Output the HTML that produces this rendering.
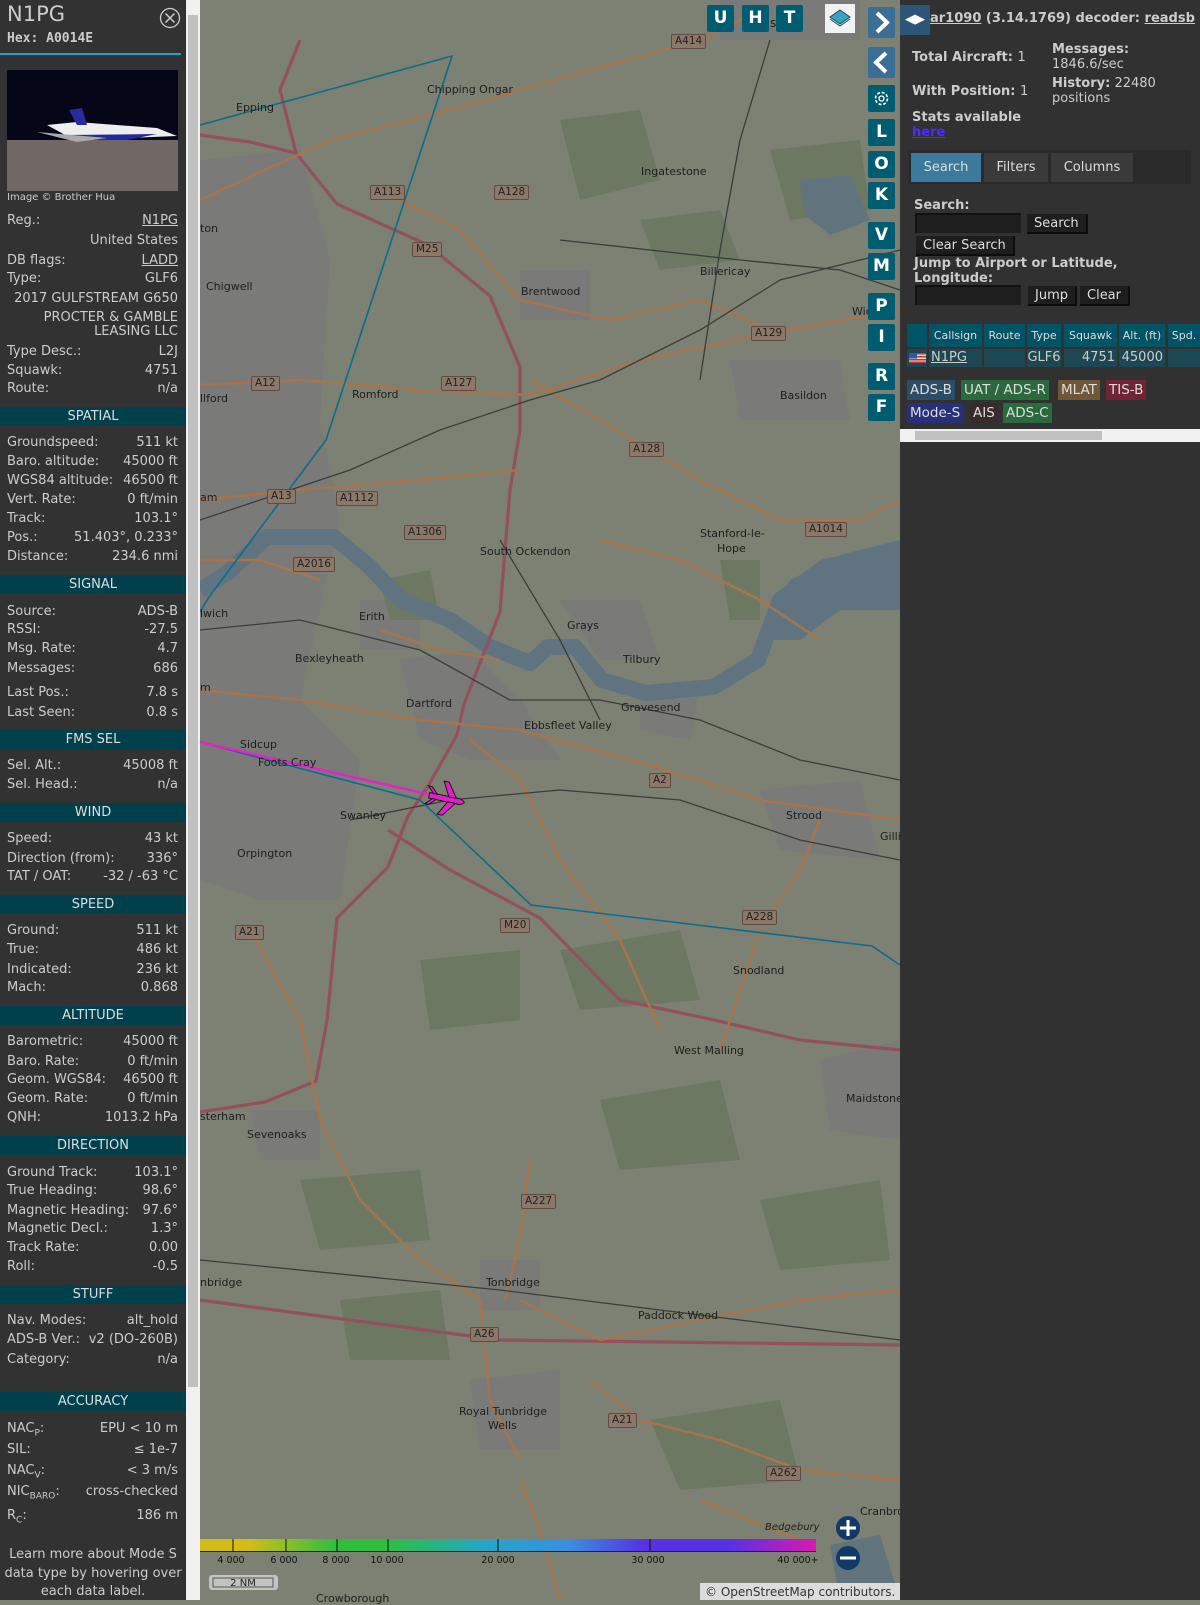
<!DOCTYPE html>
<html><head><meta charset="utf-8">
<style>
*{margin:0;padding:0;box-sizing:border-box}
body{width:1200px;height:1600px;overflow:hidden;background:#7c8173;font-family:"DejaVu Sans","Liberation Sans",sans-serif;position:relative;color:#ccc}
#map{position:absolute;left:0;top:0}
#lp{position:absolute;left:0;top:0;width:186px;height:1600px;background:#323232;font-size:13px}
#sb{position:absolute;left:186px;top:0;width:14px;height:1600px;background:#f1f1f1}
#sb .th{position:absolute;left:2px;top:15px;width:10px;height:1372px;background:#c1c1c1}
.r{position:absolute;left:7px;width:171px;height:17px;line-height:17px;white-space:nowrap}
.r b{font-weight:normal;float:right}
.c{position:absolute;left:0;width:178px;text-align:right;white-space:nowrap;line-height:17px}
.h{position:absolute;left:0;width:186px;height:19px;line-height:19px;background:#003f4c;text-align:center;color:#ddd;font-size:13px}
u{text-decoration:underline}
.btn{position:absolute;width:27px;height:27px;background:#005d71;color:#fff;font-weight:bold;font-size:17px;text-align:center;line-height:27px;border-radius:2px}
#rp{position:absolute;left:900px;top:0;width:300px;height:1600px;background:#313131;font-size:13px}
.ab{position:absolute;white-space:nowrap}
.bd{font-weight:bold}
.tb{position:absolute;top:153px;height:29px;line-height:29px;text-align:center;background:#3a3a3a;color:#ddd}
.in{position:absolute;height:20px;background:#1e1e1e;border-top:2px solid #111;border-left:2px solid #111}
.bt{position:absolute;height:20px;line-height:19px;background:#1e1e1e;color:#ddd;padding:0 7px;border-right:2px solid #0d0d0d;border-bottom:2px solid #0d0d0d}
.th2{position:absolute;top:324px;height:23px;line-height:23px;background:#005466;color:#ddd;font-size:11px;text-align:center}
.tr{position:absolute;top:349px;height:18px;line-height:18px;background:#1d4853;color:#ccc;font-size:13px}
.bg{position:absolute;height:20px;line-height:20px;padding:0 3px;font-size:13.5px;color:#ddd}
.pl{position:absolute;font-size:11px;color:#1e1e1e;white-space:nowrap}
.sh{position:absolute;font-size:10.5px;color:#222;background:#8d7769;border:1px solid #5e4c44;border-radius:2px;padding:0 3px;line-height:13px}
</style></head><body>

<svg id="map" width="1200" height="1600" viewBox="0 0 1200 1600">
<rect width="1200" height="1600" fill="#7c8173"/>
<g fill="#7a7a79">
<path d="M200 160 L300 150 L330 260 L320 420 L340 520 L300 700 L360 760 L340 900 L260 900 L200 880Z"/>
<path d="M400 660 L470 650 L520 700 L560 760 L470 760 L420 740Z"/>
<path d="M560 600 L640 600 L660 660 L600 660Z"/>
<path d="M730 360 L840 360 L850 420 L740 420Z"/>
<path d="M520 270 L590 270 L590 320 L520 320Z"/>
<path d="M640 690 L700 690 L690 740 L640 730Z"/>
<path d="M760 790 L860 780 L880 860 L780 850Z"/>
<path d="M820 1060 L900 1040 L900 1140 L830 1130Z"/>
<path d="M470 1380 L560 1370 L560 1450 L480 1450Z"/>
<path d="M250 1110 L320 1110 L320 1160 L260 1160Z"/>
<path d="M480 1260 L540 1260 L540 1310 L480 1310Z"/>
<path d="M720 0 L860 0 L860 40 L720 40Z"/>
<path d="M360 600 L420 600 L420 650 L360 650Z"/>
</g>
<g fill="#6c7862">
<path d="M560 120 L640 110 L660 180 L580 200Z"/>
<path d="M640 220 L720 210 L740 260 L660 270Z"/>
<path d="M380 580 L430 570 L440 620 L390 620Z"/>
<path d="M720 560 L760 560 L760 620 L730 620Z"/>
<path d="M560 950 L680 930 L700 1000 L580 1010Z"/>
<path d="M600 1100 L720 1080 L740 1160 L620 1170Z"/>
<path d="M300 1180 L420 1170 L430 1240 L320 1250Z"/>
<path d="M650 1420 L780 1400 L800 1480 L680 1490Z"/>
<path d="M340 1300 L440 1290 L450 1360 L350 1360Z"/>
<path d="M760 1200 L880 1180 L890 1260 L780 1270Z"/>
<path d="M420 960 L520 950 L520 1020 L430 1030Z"/>
<path d="M770 150 L860 140 L870 210 L790 220Z"/>
</g>
<path d="M800 180 L850 175 L870 220 L830 235 L805 215Z" fill="#61737d"/>
<path d="M830 1545 L880 1535 L900 1600 L840 1600Z" fill="#61737d"/>
<path d="M200 590 L227 573 L267 537 L334 537 L370 567 L401 600 L450 620 L490 647 L530 663 L548 647 L575 647 L602 680 L646 693 L713 687 L758 660 L780 600 L825 567 L900 553" fill="none" stroke="#5f7480" stroke-width="16" stroke-linejoin="round"/>
<path d="M760 640 L790 580 L840 555 L900 540 L900 610 L840 610 L800 640Z" fill="#5f7480"/>
<g fill="none" stroke="#94505c" stroke-width="3.2" stroke-linejoin="round">
<path d="M200 135 L250 142 L296 153 L337 204 L428 245 L490 296 L520 367 L520 430 L510 490 L505 550 L500 612 L480 663 L464 704 L457 735 L428 786 L408 816 L388 867 L337 918 L327 1020 L316 1081 L265 1102 L200 1112"/>
<path d="M296 153 L280 90 L300 40"/>
<path d="M388 830 L450 870 L540 918 L620 1000 L714 1020 L800 1040 L900 1050"/>
<path d="M200 1300 L500 1340 L900 1345"/>
</g>
<g fill="none" stroke="#aa744b" stroke-width="2.4" stroke-linejoin="round">
<path d="M200 200 L330 140 L450 110 L590 70 L700 40 L760 10"/>
<path d="M200 385 L300 380 L420 390 L530 395 L640 360 L760 335 L900 310"/>
<path d="M200 500 L300 490 L420 480 L520 470"/>
<path d="M380 190 L460 230 L520 300 L610 320 L700 300 L770 330"/>
<path d="M530 380 L600 420 L650 450 L700 480 L780 520 L860 520 L900 500"/>
<path d="M200 690 L300 700 L420 720 L520 730 L650 765 L760 800 L900 820"/>
<path d="M470 740 L520 780 L560 860 L620 940 L660 1030"/>
<path d="M720 1050 L760 930 L800 870 L820 820"/>
<path d="M250 930 L300 1020 L320 1120 L360 1200 L420 1260 L480 1300 L490 1400 L520 1460"/>
<path d="M530 1160 L520 1240 L505 1300"/>
<path d="M590 1380 L640 1420 L720 1440 L800 1470 L900 1480"/>
<path d="M520 1300 L600 1340 L700 1320 L800 1300 L900 1290"/>
<path d="M520 1480 L540 1530 L560 1600"/>
<path d="M700 1500 L800 1540"/>
<path d="M600 540 L680 560 L760 600 L820 640"/>
<path d="M380 630 L440 650 L500 660"/>
<path d="M200 560 L260 560 L320 580"/>
</g>
<g fill="none" stroke="#3c3c3c" stroke-width="1.3">
<path d="M200 520 L260 500 L350 470 L440 430 L530 400 L600 380 L700 330 L780 280 L900 250"/>
<path d="M560 240 L650 250 L740 260 L840 270 L900 290"/>
<path d="M200 630 L300 620 L420 650 L510 700 L600 700 L700 720 L800 760 L900 780"/>
<path d="M350 820 L450 800 L560 790 L680 800 L800 840 L900 860"/>
<path d="M200 1260 L500 1290 L900 1340"/>
<path d="M500 540 L560 640 L600 720"/>
<path d="M700 380 L720 250 L740 140 L770 40"/>
</g>
<g fill="none" stroke="#0b6d8c" stroke-width="1.6">
<path d="M200 125 L452 56 L326 440 L209 597 L200 612"/>
<path d="M200 742 L420 800 L531 905 L872 946 L900 965"/>
</g>
<path d="M200 742 L440 797" stroke="#e81fcb" stroke-width="2.4" fill="none"/>
<g transform="translate(447 799) rotate(12) scale(1.3)" fill="#e020c8" stroke="#111" stroke-width="0.7">
<path d="M-14 -2.2 L10 -2.2 Q17 0 10 2.2 L-14 2.2 Z"/>
<path d="M1 -2 L-5 -13 L-1 -13 L7 -2 Z"/>
<path d="M1 2 L-5 13 L-1 13 L7 2 Z"/>
<path d="M-11 -2 L-16 -7 L-13 -7 L-8 -2Z"/>
<path d="M-11 2 L-16 7 L-13 7 L-8 2Z"/>
</g>
<defs><linearGradient id="cs" x1="200" x2="816" gradientUnits="userSpaceOnUse">
<stop offset="0" stop-color="#d2bd16"/><stop offset="0.08" stop-color="#d2bd16"/>
<stop offset="0.22" stop-color="#2fbf3d"/><stop offset="0.3" stop-color="#2fbf3d"/>
<stop offset="0.46" stop-color="#25a6c6"/><stop offset="0.6" stop-color="#3a8ee0"/>
<stop offset="0.72" stop-color="#5632e4"/><stop offset="0.86" stop-color="#5632e4"/>
<stop offset="1" stop-color="#d919b0"/></linearGradient></defs>
<rect x="200" y="1539" width="616" height="12" fill="url(#cs)"/>
<g stroke="#111" stroke-width="1"><line x1="233" y1="1539" x2="233" y2="1551"/><line x1="286" y1="1539" x2="286" y2="1551"/><line x1="337" y1="1539" x2="337" y2="1551"/><line x1="388" y1="1539" x2="388" y2="1551"/><line x1="498" y1="1539" x2="498" y2="1551"/><line x1="650" y1="1539" x2="650" y2="1551"/></g>
<line x1="200" y1="1551.5" x2="816" y2="1551.5" stroke="#222"/>
<g font-size="9.5" fill="#111" font-family="DejaVu Sans" text-anchor="middle"><text x="231" y="1563">4 000</text><text x="284" y="1563">6 000</text><text x="336" y="1563">8 000</text><text x="387" y="1563">10 000</text><text x="498" y="1563">20 000</text><text x="648" y="1563">30 000</text><text x="798" y="1563">40 000+</text></g>
<circle cx="848" cy="1528" r="12" fill="#123a66"/><path d="M848 1520v16M840 1528h16" stroke="#fff" stroke-width="3"/>
<circle cx="848" cy="1558" r="12" fill="#123a66"/><path d="M840 1558h16" stroke="#fff" stroke-width="3"/>
<rect x="209" y="1575" width="69" height="15" rx="3" fill="#cfcfcf" opacity="0.85"/>
<rect x="213" y="1578" width="60" height="9" fill="none" stroke="#555"/>
<text x="243" y="1586" font-size="10" text-anchor="middle" fill="#222" font-family="DejaVu Sans">2 NM</text>
<rect x="700" y="1583" width="200" height="17" fill="#dcdcdc"/>
<text x="705" y="1596" font-size="12" fill="#333" font-family="DejaVu Sans">© OpenStreetMap contributors.</text>
</svg>

<div class="pl" style="left:236px;top:101px">Epping</div>
<div class="pl" style="left:427px;top:83px">Chipping Ongar</div>
<div class="pl" style="left:641px;top:165px">Ingatestone</div>
<div class="pl" style="left:521px;top:285px">Brentwood</div>
<div class="pl" style="left:700px;top:265px">Billericay</div>
<div class="pl" style="left:206px;top:280px">Chigwell</div>
<div class="pl" style="left:200px;top:222px">ton</div>
<div class="pl" style="left:352px;top:388px">Romford</div>
<div class="pl" style="left:780px;top:389px">Basildon</div>
<div class="pl" style="left:200px;top:392px">llford</div>
<div class="pl" style="left:200px;top:491px">am</div>
<div class="pl" style="left:480px;top:545px">South Ockendon</div>
<div class="pl" style="left:700px;top:527px">Stanford-le-</div>
<div class="pl" style="left:717px;top:542px">Hope</div>
<div class="pl" style="left:359px;top:610px">Erith</div>
<div class="pl" style="left:567px;top:619px">Grays</div>
<div class="pl" style="left:200px;top:607px">lwich</div>
<div class="pl" style="left:295px;top:652px">Bexleyheath</div>
<div class="pl" style="left:623px;top:653px">Tilbury</div>
<div class="pl" style="left:200px;top:681px">m</div>
<div class="pl" style="left:406px;top:697px">Dartford</div>
<div class="pl" style="left:621px;top:701px">Gravesend</div>
<div class="pl" style="left:524px;top:719px">Ebbsfleet Valley</div>
<div class="pl" style="left:240px;top:738px">Sidcup</div>
<div class="pl" style="left:258px;top:756px">Foots Cray</div>
<div class="pl" style="left:340px;top:809px">Swanley</div>
<div class="pl" style="left:237px;top:847px">Orpington</div>
<div class="pl" style="left:786px;top:809px">Strood</div>
<div class="pl" style="left:880px;top:830px">Gillin</div>
<div class="pl" style="left:852px;top:305px">Wic</div>
<div class="pl" style="left:733px;top:964px">Snodland</div>
<div class="pl" style="left:674px;top:1044px">West Malling</div>
<div class="pl" style="left:846px;top:1092px">Maidstone</div>
<div class="pl" style="left:247px;top:1128px">Sevenoaks</div>
<div class="pl" style="left:200px;top:1110px">sterham</div>
<div class="pl" style="left:486px;top:1276px">Tonbridge</div>
<div class="pl" style="left:200px;top:1276px">nbridge</div>
<div class="pl" style="left:638px;top:1309px">Paddock Wood</div>
<div class="pl" style="left:459px;top:1405px">Royal Tunbridge</div>
<div class="pl" style="left:488px;top:1419px">Wells</div>
<div class="pl" style="left:860px;top:1505px">Cranbro</div>
<div class="pl" style="left:765px;top:1522px;font-style:italic;font-size:10px">Bedgebury</div>
<div class="pl" style="left:316px;top:1592px">Crowborough</div>
<div class="pl" style="left:770px;top:16px;font-size:12px">sfo</div>
<div class="sh" style="left:671px;top:34px">A414</div>
<div class="sh" style="left:370px;top:185px">A113</div>
<div class="sh" style="left:494px;top:185px">A128</div>
<div class="sh" style="left:412px;top:242px">M25</div>
<div class="sh" style="left:751px;top:326px">A129</div>
<div class="sh" style="left:251px;top:376px">A12</div>
<div class="sh" style="left:441px;top:376px">A127</div>
<div class="sh" style="left:629px;top:442px">A128</div>
<div class="sh" style="left:336px;top:491px">A1112</div>
<div class="sh" style="left:267px;top:489px">A13</div>
<div class="sh" style="left:404px;top:525px">A1306</div>
<div class="sh" style="left:293px;top:557px">A2016</div>
<div class="sh" style="left:805px;top:522px">A1014</div>
<div class="sh" style="left:649px;top:773px">A2</div>
<div class="sh" style="left:500px;top:918px">M20</div>
<div class="sh" style="left:742px;top:910px">A228</div>
<div class="sh" style="left:235px;top:925px">A21</div>
<div class="sh" style="left:521px;top:1194px">A227</div>
<div class="sh" style="left:470px;top:1327px">A26</div>
<div class="sh" style="left:608px;top:1413px">A21</div>
<div class="sh" style="left:766px;top:1466px">A262</div>

<div class="btn" style="left:707px;top:5px">U</div>
<div class="btn" style="left:742px;top:5px">H</div>
<div class="btn" style="left:776px;top:5px">T</div>
<div style="position:absolute;left:825px;top:4px;width:30px;height:29px;background:#f2f2f2">
<svg width="30" height="29"><path d="M15 6 L25 13 L15 20 L5 13Z" fill="#39a3c3" stroke="#155" stroke-width="1"/><path d="M5 15 L15 22 L25 15" fill="none" stroke="#155"/></svg></div>
<div class="btn" style="left:868px;top:7px;height:31px;background:#3a6e96"><svg width="27" height="31"><path d="M9 6 L19 15.5 L9 25" fill="none" stroke="#fff" stroke-width="4"/></svg></div>
<div class="btn" style="left:868px;top:47px;height:31px;background:#3a6e96"><svg width="27" height="31"><path d="M18 6 L8 15.5 L18 25" fill="none" stroke="#fff" stroke-width="4"/></svg></div>
<div class="btn" style="left:868px;top:85px"><svg width="27" height="27"><circle cx="13.5" cy="13.5" r="6" fill="none" stroke="#fff" stroke-width="1.6" stroke-dasharray="3 1.7"/><circle cx="13.5" cy="13.5" r="2.5" fill="none" stroke="#fff" stroke-width="1.3"/></svg></div>
<div class="btn" style="left:868px;top:119px">L</div>
<div class="btn" style="left:868px;top:151px">O</div>
<div class="btn" style="left:868px;top:182px">K</div>
<div class="btn" style="left:868px;top:222px">V</div>
<div class="btn" style="left:868px;top:253px">M</div>
<div class="btn" style="left:868px;top:293px">P</div>
<div class="btn" style="left:868px;top:324px">I</div>
<div class="btn" style="left:868px;top:363px">R</div>
<div class="btn" style="left:868px;top:394px">F</div>

<div id="lp">
<div class="ab" style="left:7px;top:2px;font-size:21px;color:#ccc">N1PG</div>
<div class="ab bd" style="left:7px;top:31px;font-family:'DejaVu Sans Mono',monospace;font-size:13px">Hex: A0014E</div>
<svg class="ab" style="left:159px;top:7px" width="22" height="22"><circle cx="11" cy="11" r="9.5" fill="none" stroke="#ccc" stroke-width="1.3"/><path d="M6.5 6.5L15.5 15.5M15.5 6.5L6.5 15.5" stroke="#ccc" stroke-width="1.5"/></svg>
<div class="ab" style="left:0;top:53px;width:181px;height:2px;background:#1aa4cc"></div>
<svg class="ab" style="left:7px;top:70px" width="171" height="121"><rect width="171" height="121" fill="#050617"/><rect y="70" width="171" height="51" fill="#706864"/><path d="M40 55 L70 52 L150 58 L170 66 L120 68 L60 66 Z" fill="#eee"/><path d="M62 40 L75 38 L80 55 L70 55Z" fill="#2a2aa0"/><path d="M60 65 L150 64 L120 70 L70 70Z" fill="#2428a0"/><path d="M30 62 L100 68 L70 72Z" fill="#aaa"/></svg>
<div class="ab" style="left:7px;top:192px;font-size:10px">Image © Brother Hua</div>
<div class="r" style="top:212px">Reg.:<b><u>N1PG</u></b></div>
<div class="c" style="top:232px">United States</div>
<div class="r" style="top:252px">DB flags:<b><u>LADD</u></b></div>
<div class="r" style="top:270px">Type:<b>GLF6</b></div>
<div class="c" style="top:290px">2017 GULFSTREAM G650</div>
<div class="c" style="top:309px">PROCTER &amp; GAMBLE</div>
<div class="c" style="top:323px">LEASING LLC</div>
<div class="r" style="top:343px">Type Desc.:<b>L2J</b></div>
<div class="r" style="top:362px">Squawk:<b>4751</b></div>
<div class="r" style="top:380px">Route:<b>n/a</b></div>
<div class="h" style="top:407px">SPATIAL</div>
<div class="r" style="top:434px">Groundspeed:<b>511 kt</b></div>
<div class="r" style="top:453px">Baro. altitude:<b>45000 ft</b></div>
<div class="r" style="top:472px">WGS84 altitude:<b>46500 ft</b></div>
<div class="r" style="top:491px">Vert. Rate:<b>0 ft/min</b></div>
<div class="r" style="top:510px">Track:<b>103.1°</b></div>
<div class="r" style="top:529px">Pos.:<b>51.403°, 0.233°</b></div>
<div class="r" style="top:548px">Distance:<b>234.6 nmi</b></div>
<div class="h" style="top:575px">SIGNAL</div>
<div class="r" style="top:603px">Source:<b>ADS-B</b></div>
<div class="r" style="top:621px">RSSI:<b>-27.5</b></div>
<div class="r" style="top:640px">Msg. Rate:<b>4.7</b></div>
<div class="r" style="top:660px">Messages:<b>686</b></div>
<div class="r" style="top:684px">Last Pos.:<b>7.8 s</b></div>
<div class="r" style="top:704px">Last Seen:<b>0.8 s</b></div>
<div class="h" style="top:730px">FMS SEL</div>
<div class="r" style="top:757px">Sel. Alt.:<b>45008 ft</b></div>
<div class="r" style="top:776px">Sel. Head.:<b>n/a</b></div>
<div class="h" style="top:803px">WIND</div>
<div class="r" style="top:830px">Speed:<b>43 kt</b></div>
<div class="r" style="top:850px">Direction (from):<b>336°</b></div>
<div class="r" style="top:868px">TAT / OAT:<b>-32 / -63 °C</b></div>
<div class="h" style="top:895px">SPEED</div>
<div class="r" style="top:922px">Ground:<b>511 kt</b></div>
<div class="r" style="top:941px">True:<b>486 kt</b></div>
<div class="r" style="top:961px">Indicated:<b>236 kt</b></div>
<div class="r" style="top:979px">Mach:<b>0.868</b></div>
<div class="h" style="top:1006px">ALTITUDE</div>
<div class="r" style="top:1033px">Barometric:<b>45000 ft</b></div>
<div class="r" style="top:1053px">Baro. Rate:<b>0 ft/min</b></div>
<div class="r" style="top:1071px">Geom. WGS84:<b>46500 ft</b></div>
<div class="r" style="top:1090px">Geom. Rate:<b>0 ft/min</b></div>
<div class="r" style="top:1109px">QNH:<b>1013.2 hPa</b></div>
<div class="h" style="top:1136px">DIRECTION</div>
<div class="r" style="top:1164px">Ground Track:<b>103.1°</b></div>
<div class="r" style="top:1182px">True Heading:<b>98.6°</b></div>
<div class="r" style="top:1202px">Magnetic Heading:<b>97.6°</b></div>
<div class="r" style="top:1220px">Magnetic Decl.:<b>1.3°</b></div>
<div class="r" style="top:1239px">Track Rate:<b>0.00</b></div>
<div class="r" style="top:1258px">Roll:<b>-0.5</b></div>
<div class="h" style="top:1285px">STUFF</div>
<div class="r" style="top:1312px">Nav. Modes:<b>alt_hold</b></div>
<div class="r" style="top:1331px">ADS-B Ver.:<b>v2 (DO-260B)</b></div>
<div class="r" style="top:1351px">Category:<b>n/a</b></div>
<div class="h" style="top:1392px">ACCURACY</div>
<div class="r" style="top:1420px">NAC<sub style="font-size:9px">P</sub>:<b>EPU &lt; 10 m</b></div>
<div class="r" style="top:1441px">SIL:<b>≤ 1e-7</b></div>
<div class="r" style="top:1462px">NAC<sub style="font-size:9px">V</sub>:<b>&lt; 3 m/s</b></div>
<div class="r" style="top:1483px">NIC<sub style="font-size:9px">BARO</sub>:<b>cross-checked</b></div>
<div class="r" style="top:1507px">R<sub style="font-size:9px">C</sub>:<b>186 m</b></div>
<div class="ab" style="left:0;top:1546px;width:186px;text-align:center;white-space:normal;line-height:18.5px">Learn more about Mode S data type by hovering over each data label.</div>
</div>
<div id="sb"><div class="th"></div></div>

<div id="rp">
<div class="ab" style="left:0;top:5px;width:30px;height:30px;background:#2c5577;color:#fff;font-size:13px;line-height:30px;text-align:center">◀▶</div>
<div class="ab bd" style="left:30px;top:11px;font-size:13px"><u>ar1090</u> (3.14.1769) decoder: <u>readsb</u></div>
<div class="ab bd" style="left:12px;top:50px">Total Aircraft: <span style="font-weight:normal">1</span></div>
<div class="ab bd" style="left:152px;top:42px">Messages:</div>
<div class="ab" style="left:152px;top:57px">1846.6/sec</div>
<div class="ab bd" style="left:12px;top:84px">With Position: <span style="font-weight:normal">1</span></div>
<div class="ab" style="left:152px;top:76px"><span class="bd">History:</span> 22480</div>
<div class="ab" style="left:152px;top:91px">positions</div>
<div class="ab bd" style="left:12px;top:110px">Stats available</div>
<div class="ab bd" style="left:12px;top:125px;color:#4c2cff"><u>here</u></div>
<div class="ab" style="left:9px;top:150px;width:282px;height:34px;background:#2a2a2a"></div>
<div class="tb" style="left:11px;width:70px;background:#3b7a9c">Search</div>
<div class="tb" style="left:84px;width:64px">Filters</div>
<div class="tb" style="left:151px;width:82px">Columns</div>
<div class="ab bd" style="left:14px;top:198px">Search:</div>
<div class="in" style="left:15px;top:213px;width:106px"></div>
<div class="bt" style="left:127px;top:214px">Search</div>
<div class="bt" style="left:16px;top:236px">Clear Search</div>
<div class="ab bd" style="left:14px;top:256px">Jump to Airport or Latitude,</div>
<div class="ab bd" style="left:14px;top:271px">Longitude:</div>
<div class="in" style="left:15px;top:285px;width:106px"></div>
<div class="bt" style="left:128px;top:286px">Jump</div>
<div class="bt" style="left:180px;top:286px">Clear</div>
<div class="th2" style="left:7px;width:20px"></div>
<div class="th2" style="left:29px;width:53px">Callsign</div>
<div class="th2" style="left:84px;width:41px">Route</div>
<div class="th2" style="left:127px;width:34px">Type</div>
<div class="th2" style="left:164px;width:53px">Squawk</div>
<div class="th2" style="left:219px;width:46px">Alt. (ft)</div>
<div class="th2" style="left:268px;width:32px">Spd.</div>
<div class="tr" style="left:7px;width:20px"><svg width="20" height="18"><rect x="2" y="4" width="17" height="10" fill="#ddd"/><g fill="#c33"><rect x="2" y="4" width="17" height="1.5"/><rect x="2" y="7" width="17" height="1.5"/><rect x="2" y="10" width="17" height="1.5"/><rect x="2" y="12.5" width="17" height="1.5"/></g><rect x="2" y="4" width="8" height="5.5" fill="#35a"/></svg></div>
<div class="tr" style="left:29px;width:53px;padding-left:2px"><u>N1PG</u></div>
<div class="tr" style="left:84px;width:41px"></div>
<div class="tr" style="left:127px;width:34px;text-align:center">GLF6</div>
<div class="tr" style="left:164px;width:53px;text-align:right;padding-right:2px">4751</div>
<div class="tr" style="left:219px;width:46px;text-align:right;padding-right:2px">45000</div>
<div class="tr" style="left:268px;width:32px"></div>
<div class="bg" style="left:7px;top:380px;background:#2c4d66">ADS-B</div>
<div class="bg" style="left:61px;top:380px;background:#2a6a3e">UAT / ADS-R</div>
<div class="bg" style="left:158px;top:380px;background:#6e5638">MLAT</div>
<div class="bg" style="left:206px;top:380px;background:#6f2535">TIS-B</div>
<div class="bg" style="left:7px;top:403px;background:#28307a">Mode-S</div>
<div class="bg" style="left:70px;top:403px;background:#3a2b2b">AIS</div>
<div class="bg" style="left:103px;top:403px;background:#2a6a3e">ADS-C</div>
<div class="ab" style="left:0;top:429px;width:300px;height:13px;background:#f1f1f1"></div>
<div class="ab" style="left:15px;top:431px;width:187px;height:9px;background:#c1c1c1"></div>
</div>
</body></html>
